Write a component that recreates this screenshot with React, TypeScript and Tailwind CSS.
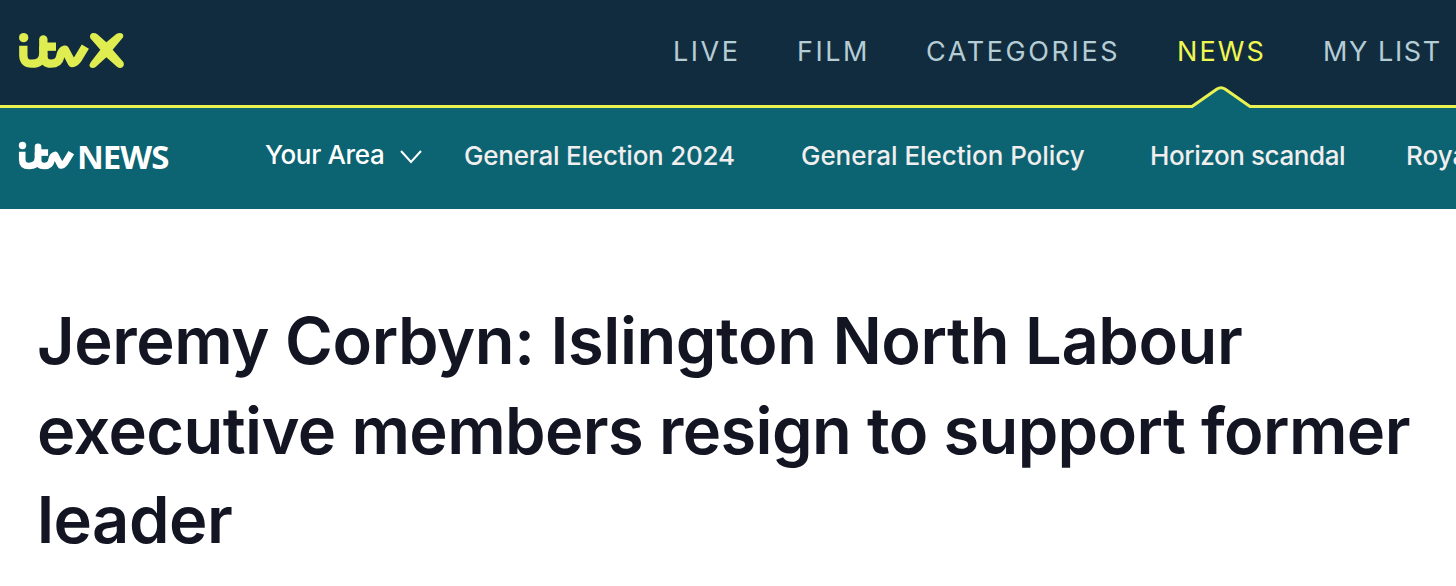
import clsx from 'clsx'

const mainNav = [
  { label: 'LIVE', className: 'w-[124px] tracking-[2.5px]' },
  { label: 'FILM', className: 'w-[129px] tracking-[2.5px]' },
  { label: 'CATEGORIES', className: 'w-[251px] tracking-[2.6px]' },
  { label: 'NEWS', className: 'w-[146px] tracking-[2.1px]', active: true },
  { label: 'MY LIST', className: 'w-[132px] tracking-[1.6px]' },
]

const topics = [
  { label: 'General Election 2024', className: 'w-[337px] tracking-[-0.22px]' },
  { label: 'General Election Policy', className: 'w-[349px] tracking-[-0.05px]' },
  { label: 'Horizon scandal', className: 'w-[256px] tracking-[-0.42px]' },
  { label: 'Royal Family', className: 'w-[200px]' },
]

function ItvMark() {
  return (
    <g fill="none" stroke="currentColor" strokeWidth="25" strokeLinejoin="round">
      <circle cx="71" cy="53" r="14" fill="currentColor" stroke="none" />
      <path d="M70 77V106Q70 131 95 131Q130 131 130 98" />
      <path d="M130 58V90" strokeLinecap="round" />
      <path d="M130 80H168" />
      <path d="M130 80V106Q130 131 153 131Q176 131 180 112Q183 92 195 89L216 129Q224 130 233 118L256 80" />
    </g>
  )
}

function ItvxLogo() {
  return (
    <svg width="108" height="38" viewBox="54 36 324 114" className="text-[#dfed51]" aria-label="ITVX">
      <ItvMark />
      <path
        fill="currentColor"
        d="M271 55Q267 43 278 39Q286 38 292 43L319 67L349 42Q360 36 368 42Q373 49 365 57L338 89L370 126Q374 135 368 141Q360 147 351 140L319 112L288 140Q278 147 270 141Q266 135 272 127L301 89Z"
      />
    </svg>
  )
}

export default function App() {
  return (
    <div className="h-[586px] overflow-hidden bg-white font-['Inter',sans-serif]">
      <header className="flex h-[105px] items-start bg-[#122c3f] pl-[18px]">
        <div className="w-[655px] shrink-0 pt-8">
          <ItvxLogo />
        </div>
        <nav className="flex pt-8 text-[27px] leading-10 text-[#b5cdd5]">
          {mainNav.map((item) => (
            <a key={item.label} className={clsx('shrink-0 whitespace-nowrap', item.className, item.active && 'relative text-[#f0f850]')}>
              <span>{item.label}</span>
              {item.active && (
                <svg width="64" height="26" viewBox="0 0 64 26" className="absolute top-[52px] left-[12px]">
                  <path d="M2 26V23.5L28 5Q32 2.5 36 5L61 23.5V26Z" fill="#0c6371" />
                  <path d="M0 22.5H3L28 5Q32 2.5 36 5L61 22.5H64" fill="none" stroke="#e9f251" strokeWidth="3" />
                </svg>
              )}
            </a>
          ))}
        </nav>
      </header>

      <div className="flex h-[104px] items-start border-t-3 border-[#e9f251] bg-[#0c6371] pl-[18px] text-white">
        <div className="flex w-[247px] shrink-0 pt-[33px]">
          <svg width="57" height="30" viewBox="54 36 216 114" preserveAspectRatio="none" aria-label="ITV">
            <ItvMark />
          </svg>
          <span className="-mt-[2px] ml-[2px] font-['Open_Sans',sans-serif] text-[33px] leading-9 font-bold tracking-[-1px]">NEWS</span>
        </div>
        <nav className="flex pt-7 text-[26px] leading-10 font-[450] text-[#f0eeee]">
          <button className="-mt-px flex h-10 w-[199px] shrink-0 items-center tracking-[-0.35px] text-white">
            Your Area
            <svg width="22" height="14" viewBox="0 0 22 14" className="mt-1 ml-4" fill="none" stroke="currentColor" strokeWidth="2">
              <path d="M1 1L11 12L21 1" />
            </svg>
          </button>
          {topics.map((topic) => (
            <a key={topic.label} className={clsx('shrink-0 whitespace-nowrap', topic.className)}>
              <span>{topic.label}</span>
            </a>
          ))}
        </nav>
      </div>

      <main className="px-[37px] pt-[87px]">
        <h1 className="text-[65px] leading-[89.5px] font-semibold whitespace-nowrap text-[#131523]">
          <span className="block tracking-[-0.42px]">Jeremy Corbyn: Islington North Labour</span>
          <span className="block tracking-[-0.61px]">executive members resign to support former</span>
          <span className="block tracking-[-0.5px]">leader</span>
        </h1>
      </main>
    </div>
  )
}
